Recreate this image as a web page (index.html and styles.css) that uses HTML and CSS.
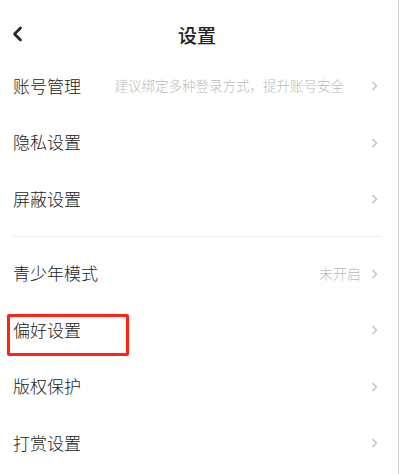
FILE: index.html
```
<!DOCTYPE html>
<html lang="zh-CN">
<head>
<meta charset="utf-8">
<title>设置</title>
<link rel="stylesheet" href="styles.css">
</head>
<body>
<div class="page">
  <header class="header">
    <svg class="back" width="12" height="16" viewBox="0 0 12 16"><path d="M9.5 2 L3.5 8 L9.5 14" fill="none" stroke="#222" stroke-width="2.6" stroke-linecap="round" stroke-linejoin="round"/></svg>
    <h1 class="title">设置</h1>
  </header>
  <section class="group">
    <div class="row">
      <span class="label">账号管理</span>
      <span class="hint hint-wide">建议绑定多种登录方式，提升账号安全</span>
      <svg class="chev" width="7" height="10" viewBox="0 0 7 10"><path d="M1.5 1 L5.5 5 L1.5 9" fill="none" stroke="#bdbdbd" stroke-width="1.3"/></svg>
    </div>
    <div class="row">
      <span class="label">隐私设置</span>
      <svg class="chev" width="7" height="10" viewBox="0 0 7 10"><path d="M1.5 1 L5.5 5 L1.5 9" fill="none" stroke="#bdbdbd" stroke-width="1.3"/></svg>
    </div>
    <div class="row">
      <span class="label">屏蔽设置</span>
      <svg class="chev" width="7" height="10" viewBox="0 0 7 10"><path d="M1.5 1 L5.5 5 L1.5 9" fill="none" stroke="#bdbdbd" stroke-width="1.3"/></svg>
    </div>
  </section>
  <div class="divider"></div>
  <section class="group">
    <div class="row">
      <span class="label">青少年模式</span>
      <span class="hint">未开启</span>
      <svg class="chev" width="7" height="10" viewBox="0 0 7 10"><path d="M1.5 1 L5.5 5 L1.5 9" fill="none" stroke="#bdbdbd" stroke-width="1.3"/></svg>
    </div>
    <div class="row highlighted">
      <span class="label">偏好设置</span>
      <svg class="chev" width="7" height="10" viewBox="0 0 7 10"><path d="M1.5 1 L5.5 5 L1.5 9" fill="none" stroke="#bdbdbd" stroke-width="1.3"/></svg>
      <span class="mark"></span>
    </div>
    <div class="row">
      <span class="label">版权保护</span>
      <svg class="chev" width="7" height="10" viewBox="0 0 7 10"><path d="M1.5 1 L5.5 5 L1.5 9" fill="none" stroke="#bdbdbd" stroke-width="1.3"/></svg>
    </div>
    <div class="row">
      <span class="label">打赏设置</span>
      <svg class="chev" width="7" height="10" viewBox="0 0 7 10"><path d="M1.5 1 L5.5 5 L1.5 9" fill="none" stroke="#bdbdbd" stroke-width="1.3"/></svg>
    </div>
  </section>
</div>
</body>
</html>
```
FILE: styles.css
```
html, body {
  margin: 0;
  padding: 0;
  background: #fff;
}
body {
  font-family: "Noto Sans CJK SC", "Noto Sans", sans-serif;
  color: #222;
}
.page {
  width: 399px;
  height: 474px;
  box-sizing: border-box;
  border-right: 1px solid #d4d4d4;
  overflow: hidden;
}
.header {
  position: relative;
  height: 58px;
  display: flex;
  align-items: center;
  justify-content: center;
  padding-top: 10px;
  box-sizing: border-box;
}
.back {
  position: absolute;
  left: 11px;
  top: 26px;
}
.title {
  margin: 0 0 0 -4px;
  font-size: 19px;
  font-weight: 500;
  color: #222;
  line-height: 1;
}
.group {
  display: flex;
  flex-direction: column;
}
.row {
  position: relative;
  height: 56.5px;
  display: flex;
  align-items: center;
  padding: 0 20px 0 13px;
}
.label {
  font-size: 17px;
  font-weight: 300;
  color: #1a1a1a;
  flex: 1;
  line-height: 1;
  margin-top: -2px;
}
.hint {
  font-size: 14px;
  font-weight: 300;
  color: #bbb;
  margin-right: 10px;
  line-height: 1;
  margin-top: -2px;
}
.hint-wide {
  font-size: 13.5px;
  margin-right: 27px;
}
.chev {
  display: block;
}
.divider {
  height: 1px;
  background: #efefef;
  margin: 8.5px 16px 8.5px 12px;
}
.mark {
  position: absolute;
  left: 7px;
  top: 12px;
  width: 122px;
  height: 42px;
  box-sizing: border-box;
  border: 3px solid #ff2418;
  border-radius: 2px;
}
```
